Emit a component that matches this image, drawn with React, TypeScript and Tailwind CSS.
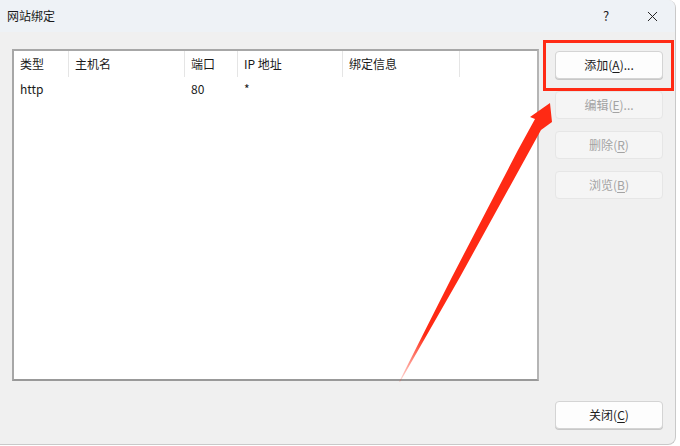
import { X } from 'lucide-react';

const font = { fontFamily: '"Noto Sans CJK SC", "Liberation Sans", sans-serif' };

const columns = [
  { label: '类型', w: 'w-[55px]' },
  { label: '主机名', w: 'w-[116px]' },
  { label: '端口', w: 'w-[53px]' },
  { label: 'IP 地址', w: 'w-[105px]' },
  { label: '绑定信息', w: 'w-[117px]' },
];

function Btn({ label, mnemonic, tail = '', disabled = false }: { label: string; mnemonic: string; tail?: string; disabled?: boolean }) {
  return (
    <div
      className={
        'h-[28px] w-[108px] rounded-[4px] border flex items-center justify-center text-[12px] ' +
        (disabled
          ? 'bg-[#f5f5f5] border-[#e6e6e6] text-[#a3a3a3]'
          : 'bg-[#fdfdfd] border-[#d4d4d4] text-[#1b1b1b] shadow-[0_1px_0_#c8c8c8]')
      }
    >
      {label}(<u className="underline-offset-2">{mnemonic}</u>){tail}
    </div>
  );
}

export default function App() {
  return (
    <div className="w-[680px] h-[446px] bg-white overflow-hidden" style={font}>
      <div className="relative w-[676px] h-[445px] bg-[#f0f0f0] border-r border-b border-[#c9c9c9] rounded-br-[8px] rounded-tr-[8px] overflow-hidden flex flex-col">
        {/* title bar */}
        <div className="h-[32px] bg-[#eef2f6] flex items-center justify-between pl-[7px] shrink-0">
          <span className="text-[12px] text-[#1a1a1a]">网站绑定</span>
          <div className="flex items-center h-full">
            <span className="w-[46px] text-center text-[13px] text-[#222]">?</span>
            <span className="w-[46px] flex justify-center">
              <X size={17} strokeWidth={1.4} className="text-[#222]" />
            </span>
          </div>
        </div>

        {/* body */}
        <div className="flex-1 flex pl-[12px] pt-[17px]">
          <div className="w-[527px] h-[332px] bg-white border-2 border-[#a7a7a7] border-r-[#b5b5b5] border-b-[#999]">
            <div className="flex h-[26px] text-[12px] text-[#1a1a1a]">
              {columns.map((c) => (
                <div key={c.label} className={c.w + ' border-r border-[#e5e5e5] pl-[6px] flex items-center'}>
                  {c.label}
                </div>
              ))}
            </div>
            <div className="flex h-[24px] items-center text-[12px] text-[#1a1a1a]">
              <div className="w-[55px] pl-[6px]">http</div>
              <div className="w-[116px]" />
              <div className="w-[53px] pl-[6px]">80</div>
              <div className="w-[105px] pl-[6px]">*</div>
            </div>
          </div>

          <div className="ml-[16px] flex flex-col pt-[2px]">
            <div className="flex flex-col gap-[12px]">
              <Btn label="添加" mnemonic="A" tail="..." />
              <Btn label="编辑" mnemonic="E" tail="..." disabled />
              <Btn label="删除" mnemonic="R" disabled />
              <Btn label="浏览" mnemonic="B" disabled />
            </div>
            <div className="mt-auto mb-[15px]">
              <Btn label="关闭" mnemonic="C" />
            </div>
          </div>
        </div>

        {/* annotation: red box */}
        <div className="absolute left-[543px] top-[40px] w-[131px] h-[51px] border-[3px] border-[#ff2a14]" />

        {/* annotation: arrow */}
        <svg className="absolute left-0 top-0 pointer-events-none" width="680" height="446" viewBox="0 0 680 446">
          <defs>
            <linearGradient id="fade" x1="399" y1="382" x2="425" y2="335" gradientUnits="userSpaceOnUse">
              <stop offset="0" stopColor="#ff2a14" stopOpacity="0.15" />
              <stop offset="1" stopColor="#ff2a14" />
            </linearGradient>
          </defs>
          <polygon
            points="399,382 452,277 518,150 535,119 530,117 550,103 552,122 541,130 530,150 460,277 400,382"
            fill="url(#fade)"
          />
        </svg>
      </div>
    </div>
  );
}
